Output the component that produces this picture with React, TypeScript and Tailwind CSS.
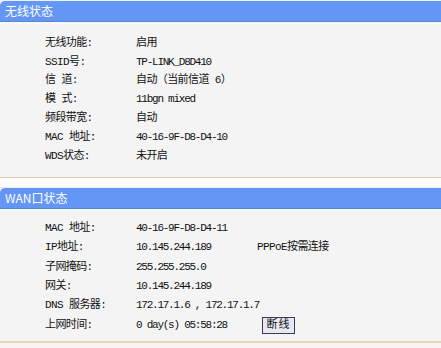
const wireless: [string, string, boolean][] = [
  ["无线功能:", "启用", false],
  ["SSID号:", "TP-LINK_D8D410", true],
  ["信 道:", "自动（当前信道 6）", false],
  ["模 式:", "11bgn mixed", true],
  ["频段带宽:", "自动", false],
  ["MAC 地址:", "40-16-9F-D8-D4-10", true],
  ["WDS状态:", "未开启", false],
];

function Header({ title }: { title: string }) {
  return (
    <div className="h-[21px] bg-[#6496f6] border-b border-[#5a86d8] rounded-tl-[5px] flex items-center pl-[5px] text-white text-[12px] tracking-normal font-['Noto_Sans_CJK_SC',sans-serif]">
      {title}
    </div>
  );
}

function Row({ label, children }: { label: string; children: React.ReactNode }) {
  return (
    <div className="flex items-center">
      <div className="w-[91px] shrink-0">{label}</div>
      {children}
    </div>
  );
}

// latin-only values, narrowed to the bitmap font's width
function M({ children, className = "" }: { children: React.ReactNode; className?: string }) {
  return <span className={"tracking-[-1.25px] " + className}>{children}</span>;
}

export default function App() {
  return (
    <div className="w-[441px] h-[348px] bg-[#f8f5f0] overflow-hidden text-[#111] text-[11px] tracking-[-0.6px] font-['Liberation_Mono','Noto_Sans_CJK_SC',monospace]">
      {/* 无线状态 */}
      <div className="pt-[1px] bg-[#eef3fb]">
        <Header title="无线状态" />
      </div>
      <div className="border-t-2 border-[#f6fafe] bg-[#f4f4f4] pt-[9.6px] pb-[11.4px] pl-[45px] border-b border-b-[#dccbb0] flex flex-col [&>div]:h-[18.85px]">
        {wireless.map(([k, v, mono]) => (
          <Row key={k} label={k}>
            {mono ? <M>{v}</M> : <span>{v}</span>}
          </Row>
        ))}
      </div>

      {/* WAN口状态 */}
      <div className="h-[10px] bg-[#fcfcf8] border-b border-[#e8eef8]" />
      <Header title="WAN口状态" />
      <div className="border-t border-[#f6fafe] bg-[#f4f4f4] pt-[8.5px] pb-[6px] pl-[45px] border-b-2 border-b-[#e4d4bc] flex flex-col [&>div]:h-[19.4px]">
        <Row label="MAC 地址:">
          <M>40-16-9F-D8-D4-11</M>
        </Row>
        <Row label="IP地址:">
          <M className="w-[121px]">10.145.244.189</M>
          <span>PPPoE按需连接</span>
        </Row>
        <Row label="子网掩码:">
          <M>255.255.255.0</M>
        </Row>
        <Row label="网关:">
          <M>10.145.244.189</M>
        </Row>
        <Row label="DNS 服务器:">
          <M>172.17.1.6 , 172.17.1.7</M>
        </Row>
        <Row label="上网时间:">
          <M className="w-[126px]">0 day(s) 05:58:28</M>
          <button className="h-[17px] w-[33px] bg-[#e6e8f2] border border-[#3c3c50] text-[11px] tracking-[1px] leading-none flex items-center justify-center">
            断线
          </button>
        </Row>
      </div>
    </div>
  );
}
